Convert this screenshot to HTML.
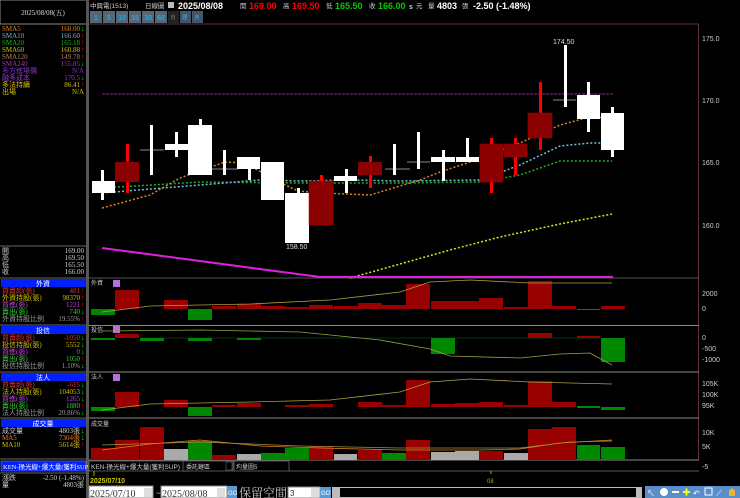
<!DOCTYPE html>
<html><head><meta charset="utf-8"><style>
html,body{margin:0;padding:0;background:#000;width:740px;height:498px;overflow:hidden}
svg{display:block;font-family:"Liberation Sans","Noto Sans CJK TC",sans-serif}
</style></head><body>
<svg width="740" height="498" viewBox="0 0 740 498" xmlns="http://www.w3.org/2000/svg">
<rect width="740" height="498" fill="#000"/>
<!-- left panel borders -->
<rect x="0" y="0" width="87" height="24" fill="#000" stroke="#888" stroke-width="1"/>
<text x="43" y="15" fill="#ddd" font-size="7" text-anchor="middle" font-family="Liberation Serif,Noto Serif CJK SC,serif">2025/08/08(五)</text>
<rect x="86" y="0" width="3" height="498" fill="#555"/>
<g font-size="7" font-family="Liberation Serif,Noto Sans CJK TC,serif">
<text x="2" y="31" fill="#e08020">SMA5</text><text x="80" y="31" fill="#e08020" text-anchor="end">168.00</text><text x="81" y="31" fill="#0f0">↓</text>
<text x="2" y="38" fill="#70b0e0">SMA10</text><text x="80" y="38" fill="#70b0e0" text-anchor="end">166.60</text><text x="81" y="38" fill="#f00">↑</text>
<text x="2" y="45" fill="#20b020">SMA20</text><text x="80" y="45" fill="#20b020" text-anchor="end">165.18</text><text x="81" y="45" fill="#f00">↑</text>
<text x="2" y="52" fill="#d0c000">SMA60</text><text x="80" y="52" fill="#d0c000" text-anchor="end">160.88</text><text x="81" y="52" fill="#f00">↑</text>
<text x="2" y="59" fill="#b08060">SMA120</text><text x="80" y="59" fill="#b08060" text-anchor="end">149.78</text><text x="81" y="59" fill="#f00">↑</text>
<text x="2" y="66" fill="#b030b0">SMA240</text><text x="80" y="66" fill="#b030b0" text-anchor="end">155.85</text><text x="81" y="66" fill="#0f0">↓</text>
<text x="2" y="73" fill="#8030d0">多方進場價</text><text x="84" y="73" fill="#8030d0" text-anchor="end">N/A</text>
<text x="2" y="80" fill="#9040c0">融多成本</text><text x="80" y="80" fill="#9040c0" text-anchor="end">170.5</text><text x="81" y="80" fill="#888">↓</text>
<text x="2" y="87" fill="#d0c000">多法持續</text><text x="80" y="87" fill="#d0c000" text-anchor="end">86.41</text><text x="81" y="87" fill="#f00">↑</text>
<text x="2" y="94" fill="#d0c000">出場</text><text x="84" y="94" fill="#d0c000" text-anchor="end">N/A</text>
<line x1="0" y1="246" x2="87" y2="246" fill="none" stroke="#666"/>
<text x="2" y="253" fill="#ccc">開</text><text x="84" y="253" fill="#ccc" text-anchor="end">169.00</text>
<text x="2" y="260" fill="#ccc">高</text><text x="84" y="260" fill="#ccc" text-anchor="end">169.50</text>
<text x="2" y="267" fill="#ccc">低</text><text x="84" y="267" fill="#ccc" text-anchor="end">165.50</text>
<text x="2" y="274" fill="#ccc">收</text><text x="84" y="274" fill="#ccc" text-anchor="end">166.00</text>
<!-- 外資 -->
<rect x="1" y="279" width="85" height="8" fill="#0020ff"/><text x="43" y="286" fill="#fff" text-anchor="middle">外資</text>
<text x="2" y="293" fill="#e03030">買賣超(張)</text><text x="80" y="293" fill="#e03030" text-anchor="end">481</text><text x="81" y="293" fill="#f00">↑</text>
<text x="2" y="300" fill="#d0c000">外資持股(張)</text><text x="80" y="300" fill="#d0c000" text-anchor="end">98370</text><text x="81" y="300" fill="#f00">↑</text>
<text x="2" y="307" fill="#c040e0">買進(張)</text><text x="80" y="307" fill="#c040e0" text-anchor="end">1221</text><text x="81" y="307" fill="#f00">↑</text>
<text x="2" y="314" fill="#30d030">賣出(張)</text><text x="80" y="314" fill="#30d030" text-anchor="end">740</text><text x="81" y="314" fill="#0f0">↓</text>
<text x="2" y="321" fill="#999">外資持股比例</text><text x="80" y="321" fill="#999" text-anchor="end">19.55%</text><text x="81" y="321" fill="#f00">↑</text>
<!-- 投信 -->
<rect x="1" y="326" width="85" height="8" fill="#0020ff"/><text x="43" y="333" fill="#fff" text-anchor="middle">投信</text>
<text x="2" y="340" fill="#e03030">買賣超(張)</text><text x="80" y="340" fill="#e03030" text-anchor="end">-1050</text><text x="81" y="340" fill="#0f0">↓</text>
<text x="2" y="347" fill="#d0c000">投信持股(張)</text><text x="80" y="347" fill="#d0c000" text-anchor="end">5552</text><text x="81" y="347" fill="#0f0">↓</text>
<text x="2" y="354" fill="#c040e0">買進(張)</text><text x="80" y="354" fill="#c040e0" text-anchor="end">0</text><text x="81" y="354" fill="#0f0">↓</text>
<text x="2" y="361" fill="#30d030">賣出(張)</text><text x="80" y="361" fill="#30d030" text-anchor="end">1050</text><text x="81" y="361" fill="#f00">↑</text>
<text x="2" y="368" fill="#999">投信持股比例</text><text x="80" y="368" fill="#999" text-anchor="end">1.10%</text><text x="81" y="368" fill="#0f0">↓</text>
<!-- 法人 -->
<rect x="1" y="373" width="85" height="8" fill="#0020ff"/><text x="43" y="380" fill="#fff" text-anchor="middle">法人</text>
<text x="2" y="387" fill="#e03030">買賣超(張)</text><text x="80" y="387" fill="#e03030" text-anchor="end">-615</text><text x="81" y="387" fill="#0f0">↓</text>
<text x="2" y="394" fill="#d0c000">法人持股(張)</text><text x="80" y="394" fill="#d0c000" text-anchor="end">104053</text><text x="81" y="394" fill="#0f0">↓</text>
<text x="2" y="401" fill="#c040e0">買進(張)</text><text x="80" y="401" fill="#c040e0" text-anchor="end">1265</text><text x="81" y="401" fill="#0f0">↓</text>
<text x="2" y="408" fill="#30d030">賣出(張)</text><text x="80" y="408" fill="#30d030" text-anchor="end">1880</text><text x="81" y="408" fill="#f00">↑</text>
<text x="2" y="415" fill="#999">法人持股比例</text><text x="80" y="415" fill="#999" text-anchor="end">20.86%</text><text x="81" y="415" fill="#0f0">↓</text>
<!-- 成交量 -->
<rect x="1" y="419" width="85" height="8" fill="#0020ff"/><text x="43" y="426" fill="#fff" text-anchor="middle">成交量</text>
<text x="2" y="433" fill="#ccc">成交量</text><text x="80" y="433" fill="#ccc" text-anchor="end">4803張</text><text x="81" y="433" fill="#0f0">↓</text>
<text x="2" y="440" fill="#e08020">MA5</text><text x="80" y="440" fill="#e08020" text-anchor="end">7304張</text><text x="81" y="440" fill="#0f0">↓</text>
<text x="2" y="447" fill="#d0c000">MA10</text><text x="80" y="447" fill="#d0c000" text-anchor="end">5614張</text><text x="81" y="447" fill="#f00">↑</text>
<rect x="1" y="461" width="85" height="10" fill="#0020ff" stroke="#88f" stroke-width="0.5"/><text x="3" y="469" fill="#fff" font-size="6.5">KEN-操光線+爆大量(獲利SUP)</text>
<text x="2" y="480" fill="#ccc">漲跌</text><text x="84" y="480" fill="#ccc" text-anchor="end">-2.50 (-1.48%)</text>
<text x="2" y="487" fill="#ccc">量</text><text x="84" y="487" fill="#ccc" text-anchor="end">4803張</text>
</g>
<line x1="0" y1="278" x2="87" y2="278" stroke="#666"/>
<line x1="0" y1="325" x2="87" y2="325" stroke="#666"/>
<line x1="0" y1="372" x2="87" y2="372" stroke="#666"/>
<line x1="0" y1="418" x2="87" y2="418" stroke="#666"/>
<line x1="0" y1="459" x2="87" y2="459" stroke="#666"/>
<line x1="0" y1="473" x2="87" y2="473" stroke="#666"/>

<!-- top header -->
<g font-size="9" font-weight="bold">
<text x="90" y="8" fill="#ccc" font-size="6.5" font-weight="normal">中興電(1513)</text>
<text x="145" y="8" fill="#ccc" font-size="6.5" font-weight="normal">日線圖</text>
<rect x="168" y="2" width="6" height="6" fill="#bbb"/>
<text x="178" y="9" fill="#fff">2025/08/08</text>
<text x="240" y="8" fill="#ccc" font-size="6.5" font-weight="normal">開</text><text x="249" y="9" fill="#f00">169.00</text>
<text x="283" y="8" fill="#ccc" font-size="6.5" font-weight="normal">高</text><text x="292" y="9" fill="#f00">169.50</text>
<text x="326" y="8" fill="#ccc" font-size="6.5" font-weight="normal">低</text><text x="335" y="9" fill="#0c0">165.50</text>
<text x="369" y="8" fill="#ccc" font-size="6.5" font-weight="normal">收</text><text x="378" y="9" fill="#0c0">166.00</text>
<text x="409" y="9" fill="#ccc" font-size="7">s</text><text x="416" y="8" fill="#ccc" font-size="6.5" font-weight="normal">元</text>
<text x="428" y="8" fill="#ccc" font-size="6.5" font-weight="normal">量</text><text x="437" y="9" fill="#fff">4803</text><text x="462" y="8" fill="#ccc" font-size="6.5" font-weight="normal">張</text>
<text x="473" y="9" fill="#fff">-2.50 (-1.48%)</text>
</g>
<g font-size="7" font-weight="bold" fill="#2ad">
<rect x="90" y="11" width="12" height="12" fill="#567"/><text x="96" y="20" text-anchor="middle">1</text>
<rect x="103" y="11" width="12" height="12" fill="#567"/><text x="109" y="20" text-anchor="middle">5</text>
<rect x="116" y="11" width="12" height="12" fill="#567"/><text x="122" y="20" text-anchor="middle">10</text>
<rect x="129" y="11" width="12" height="12" fill="#567"/><text x="135" y="20" text-anchor="middle">15</text>
<rect x="142" y="11" width="12" height="12" fill="#567"/><text x="148" y="20" text-anchor="middle">30</text>
<rect x="155" y="11" width="12" height="12" fill="#567"/><text x="161" y="20" text-anchor="middle">60</text>
<rect x="168" y="11" width="11" height="12" fill="#222"/><text x="173" y="19" text-anchor="middle" font-size="5" fill="#666">日</text>
<rect x="180" y="11" width="11" height="12" fill="#456"/><text x="185" y="19" text-anchor="middle" font-size="5">週</text>
<rect x="192" y="11" width="11" height="12" fill="#456"/><text x="197" y="19" text-anchor="middle" font-size="5">月</text>
</g>

<!-- chart frame -->
<line x1="89" y1="24" x2="699" y2="24" stroke="#603040"/>
<line x1="698.5" y1="24" x2="698.5" y2="460" stroke="#603040"/>
<line x1="89" y1="278" x2="699" y2="278" stroke="#555"/>
<line x1="89" y1="325.5" x2="699" y2="325.5" stroke="#888"/>
<line x1="89" y1="372" x2="699" y2="372" stroke="#888"/>
<line x1="89" y1="418" x2="699" y2="418" stroke="#888"/>
<line x1="89" y1="460" x2="699" y2="460" stroke="#888"/>
<rect x="718" y="0" width="22" height="462" fill="#000"/>
<g font-size="7" fill="#ccc" font-family="Liberation Sans,sans-serif">
<text x="702" y="41">175.0</text><text x="702" y="103">170.0</text><text x="702" y="165">165.0</text><text x="702" y="228">160.0</text>
<text x="702" y="296">2000</text><text x="702" y="311">0</text>
<text x="702" y="340">0</text><text x="702" y="351">-500</text><text x="702" y="362">-1000</text>
<text x="702" y="386">105K</text><text x="702" y="397">100K</text><text x="702" y="408">95K</text>
<text x="702" y="435">10K</text><text x="702" y="449">5K</text><text x="702" y="469">-5</text>
</g>

<!-- horizontal line 170.5 -->
<line x1="102" y1="94" x2="613" y2="94" stroke="#803080" stroke-width="1" stroke-dasharray="3,1"/>

<!-- moving averages -->
<polyline points="350,278 400,264 450,250 500,237 560,224 612,214" fill="none" stroke="#e0e020" stroke-width="1.5" stroke-dasharray="2,2"/>
<polyline points="102,188 200,182 300,183 400,183 480,182 520,175 560,161 612,161" fill="none" stroke="#20b020" stroke-width="1.5" stroke-dasharray="2,2"/>
<polyline points="102,193 200,185 260,180 300,181 350,180 400,181 480,180 520,165 560,146 590,143 612,143" fill="none" stroke="#70c0e0" stroke-width="1.5" stroke-dasharray="2,2"/>
<polyline points="102,208 150,195 180,178 225,162 245,163 275,180 298,191 320,193 370,195 420,180 440,172 470,162 520,143 560,125 590,117 612,118" fill="none" stroke="#e08020" stroke-width="1.5" stroke-dasharray="2,2"/>
<polyline points="102,248 200,261 320,277" fill="none" stroke="#e020e0" stroke-width="2"/>
<line x1="320" y1="277" x2="613" y2="277" stroke="#e020e0" stroke-width="2"/>

<!-- candles -->
<g stroke="none">
<rect x="101" y="170" width="3" height="30" fill="#fff"/><rect x="92" y="181" width="23" height="12" fill="#fff"/>
<rect x="126" y="144" width="3" height="49" fill="#f00"/><rect x="115" y="162" width="24" height="20" fill="#8b0000"/>
<line x1="140" y1="150" x2="164" y2="150" stroke="#888"/><rect x="150" y="125" width="3" height="50" fill="#fff"/>
<rect x="175" y="132" width="3" height="25" fill="#fff"/><rect x="165" y="144" width="23" height="6" fill="#fff"/>
<rect x="199" y="119" width="3" height="10" fill="#fff"/><rect x="188" y="125" width="24" height="50" fill="#fff"/>
<line x1="212" y1="169" x2="238" y2="169" stroke="#888"/><rect x="223" y="150" width="3" height="25" fill="#fff"/>
<rect x="248" y="157" width="3" height="23" fill="#fff"/><rect x="237" y="157" width="23" height="12" fill="#fff"/>
<rect x="261" y="162" width="23" height="38" fill="#fff"/>
<rect x="297" y="188" width="3" height="8" fill="#fff"/><rect x="285" y="193" width="24" height="50" fill="#fff"/>
<rect x="320" y="175" width="3" height="8" fill="#f00"/><rect x="309" y="181" width="24" height="44" fill="#8b0000" stroke="#a00" stroke-width="0.5"/>
<rect x="345" y="169" width="3" height="24" fill="#fff"/><rect x="334" y="176" width="23" height="5" fill="#fff"/>
<rect x="369" y="156" width="3" height="32" fill="#f00"/><rect x="358" y="162" width="24" height="13" fill="#8b0000"/>
<line x1="385" y1="169" x2="410" y2="169" stroke="#888"/><rect x="393" y="144" width="3" height="31" fill="#fff"/>
<line x1="407" y1="162" x2="430" y2="162" stroke="#888"/><rect x="417" y="132" width="3" height="37" fill="#fff"/>
<rect x="442" y="150" width="3" height="31" fill="#fff"/><rect x="431" y="157" width="24" height="5" fill="#fff"/>
<rect x="466" y="138" width="3" height="24" fill="#fff"/><rect x="456" y="157" width="23" height="5" fill="#fff"/>
<rect x="490" y="138" width="3" height="55" fill="#f00"/><rect x="480" y="144" width="23" height="38" fill="#8b0000" stroke="#a00" stroke-width="0.5"/>
<rect x="514" y="138" width="3" height="37" fill="#f00"/><rect x="504" y="144" width="23" height="13" fill="#8b0000" stroke="#a00" stroke-width="0.5"/>
<rect x="539" y="82" width="3" height="68" fill="#f00"/><rect x="528" y="113" width="24" height="25" fill="#8b0000" stroke="#a00" stroke-width="0.5"/>
<line x1="553" y1="100" x2="576" y2="100" stroke="#888"/><rect x="564" y="45" width="3" height="62" fill="#fff"/>
<rect x="587" y="82" width="3" height="50" fill="#fff"/><rect x="577" y="95" width="23" height="24" fill="#fff"/>
<rect x="611" y="107" width="3" height="50" fill="#fff"/><rect x="601" y="113" width="23" height="37" fill="#fff"/>
</g>
<text x="553" y="44" fill="#ddd" font-size="7">174.50</text>
<text x="286" y="249" fill="#ddd" font-size="7">158.50</text>

<!-- panel labels -->
<g font-size="6" fill="#ccc">
<text x="91" y="285">外資</text><rect x="113" y="280" width="7" height="7" fill="#b070e0"/>
<text x="91" y="332">投信</text><rect x="113" y="326" width="7" height="7" fill="#b070e0"/>
<text x="91" y="379">法人</text><rect x="113" y="374" width="7" height="7" fill="#b070e0"/>
<text x="91" y="426">成交量</text>
</g>

<!-- panel 1 外資 zero 309 -->
<g>
<rect x="91" y="309" width="24" height="6" fill="#080"/>
<rect x="115" y="290" width="24" height="19" fill="#900"/>
<rect x="164" y="300" width="24" height="9" fill="#900"/>
<rect x="188" y="309" width="24" height="11" fill="#080"/>
<rect x="212" y="306" width="24" height="3" fill="#900"/>
<rect x="237" y="304" width="24" height="5" fill="#900"/>
<rect x="261" y="306" width="24" height="3" fill="#900"/>
<rect x="285" y="307" width="24" height="2" fill="#900"/>
<rect x="309" y="305" width="24" height="4" fill="#900"/>
<rect x="334" y="306" width="24" height="3" fill="#900"/>
<rect x="358" y="303" width="24" height="6" fill="#900"/>
<rect x="382" y="305" width="24" height="4" fill="#900"/>
<rect x="406" y="284" width="24" height="25" fill="#900"/>
<rect x="431" y="301" width="24" height="8" fill="#900"/>
<rect x="455" y="301" width="24" height="8" fill="#900"/>
<rect x="479" y="298" width="24" height="11" fill="#900"/>
<rect x="504" y="307" width="24" height="2" fill="#900"/>
<rect x="528" y="281" width="24" height="28" fill="#900"/>
<rect x="552" y="306" width="24" height="3" fill="#900"/>
<rect x="577" y="309" width="23" height="1" fill="#080"/>
<rect x="601" y="306" width="24" height="3" fill="#900"/>
<polyline points="102,312 150,306 250,304 330,300 400,292 430,282 470,280 530,283 570,283 612,283" fill="none" stroke="#b0a040" stroke-width="0.8"/>
</g>
<!-- panel 2 投信 zero 338 -->
<g>
<rect x="91" y="338" width="24" height="2" fill="#080"/>
<rect x="115" y="334" width="24" height="4" fill="#900"/>
<rect x="140" y="338" width="24" height="3" fill="#080"/>
<rect x="188" y="338" width="24" height="3" fill="#080"/>
<rect x="237" y="338" width="24" height="2" fill="#080"/>
<rect x="431" y="338" width="24" height="16" fill="#080"/>
<rect x="528" y="333" width="24" height="5" fill="#900"/>
<rect x="577" y="336" width="23" height="2" fill="#900"/>
<rect x="601" y="338" width="24" height="24" fill="#080"/>
<line x1="140" y1="338" x2="600" y2="338" stroke="#062" stroke-width="0.6"/>
<polyline points="102,331 200,330 300,332 380,340 430,349 450,356 520,358 560,354 590,353 612,365" fill="none" stroke="#a0a040" stroke-width="0.8"/>
</g>
<!-- panel 3 法人 zero 407 -->
<g>
<rect x="91" y="407" width="24" height="4" fill="#080"/>
<rect x="115" y="392" width="24" height="15" fill="#900"/>
<rect x="164" y="400" width="24" height="7" fill="#900"/>
<rect x="188" y="407" width="24" height="9" fill="#080"/>
<rect x="212" y="405" width="24" height="2" fill="#900"/>
<rect x="237" y="403" width="24" height="4" fill="#900"/>
<rect x="285" y="405" width="24" height="2" fill="#900"/>
<rect x="309" y="404" width="24" height="3" fill="#900"/>
<rect x="358" y="402" width="24" height="5" fill="#900"/>
<rect x="382" y="405" width="24" height="2" fill="#900"/>
<rect x="406" y="380" width="24" height="27" fill="#900"/>
<rect x="431" y="404" width="24" height="3" fill="#900"/>
<rect x="455" y="403" width="24" height="4" fill="#900"/>
<rect x="479" y="402" width="24" height="5" fill="#900"/>
<rect x="504" y="405" width="24" height="2" fill="#900"/>
<rect x="528" y="381" width="24" height="26" fill="#900"/>
<rect x="552" y="402" width="24" height="5" fill="#900"/>
<rect x="577" y="406" width="23" height="2" fill="#080"/>
<rect x="601" y="407" width="24" height="3" fill="#080"/>
<polyline points="102,410 150,404 250,402 330,400 400,392 430,382 470,379 530,382 570,383 612,384" fill="none" stroke="#b0a040" stroke-width="0.8"/>
</g>
<!-- panel 4 volume bottom 460 -->
<g>
<rect x="91" y="448" width="24" height="12" fill="#900"/>
<rect x="115" y="440" width="24" height="20" fill="#900"/>
<rect x="140" y="427" width="24" height="33" fill="#900"/>
<rect x="164" y="449" width="24" height="11" fill="#aaa"/>
<rect x="188" y="441" width="24" height="19" fill="#080"/>
<rect x="212" y="455" width="24" height="5" fill="#900"/>
<rect x="237" y="454" width="24" height="6" fill="#aaa"/>
<rect x="261" y="453" width="24" height="7" fill="#080"/>
<rect x="285" y="448" width="24" height="12" fill="#080"/>
<rect x="309" y="446" width="24" height="14" fill="#900"/>
<rect x="334" y="454" width="23" height="6" fill="#aaa"/>
<rect x="358" y="450" width="24" height="10" fill="#900"/>
<rect x="382" y="453" width="24" height="7" fill="#080"/>
<rect x="406" y="440" width="24" height="20" fill="#900"/>
<rect x="431" y="452" width="24" height="8" fill="#aaa"/>
<rect x="455" y="451" width="24" height="9" fill="#aaa"/>
<rect x="479" y="451" width="24" height="9" fill="#900"/>
<rect x="504" y="453" width="24" height="7" fill="#aaa"/>
<rect x="528" y="429" width="24" height="31" fill="#900"/>
<rect x="552" y="427" width="24" height="33" fill="#900"/>
<rect x="577" y="445" width="23" height="15" fill="#080"/>
<rect x="601" y="447" width="24" height="13" fill="#080"/>
<polyline points="102,450 150,444 200,440 260,446 320,448 400,450 480,450 520,449 560,443 612,440" fill="none" stroke="#e08020" stroke-width="0.8"/>
<polyline points="102,445 200,442 300,446 400,448 520,448 570,442 612,441" fill="none" stroke="#a09040" stroke-width="0.8"/>
</g>

<!-- bottom controls -->
<rect x="89" y="461" width="100" height="10" fill="#000" stroke="#777" stroke-width="0.7"/>
<text x="91" y="469" fill="#ccc" font-size="6.5">KEN-操光線+爆大量(獲利SUP)</text>
<rect x="183" y="461" width="50" height="10" fill="#000" stroke="#777" stroke-width="0.7"/>
<text x="186" y="469" fill="#ccc" font-size="6">委託鏈區</text>
<rect x="226" y="462" width="6" height="8" fill="#000" stroke="#777" stroke-width="0.5"/>
<rect x="234" y="461" width="55" height="10" fill="#000" stroke="#777" stroke-width="0.7"/>
<text x="236" y="469" fill="#ccc" font-size="6">均量圖5</text>
<line x1="289" y1="471" x2="699" y2="471" stroke="#777" stroke-width="0.7"/>
<line x1="94" y1="471" x2="94" y2="476" stroke="#aa0"/>
<text x="90" y="483" fill="#cc0" font-size="7" font-weight="bold">2025/07/10</text>
<line x1="491" y1="471" x2="491" y2="474" stroke="#aa0"/>
<text x="487" y="483" fill="#aa0" font-size="6">08</text>

<rect x="89" y="486" width="64" height="12" fill="#fff" stroke="#888"/>
<text x="90" y="497" fill="#333" font-size="10" font-family="Liberation Serif,serif">2025/07/10</text>
<rect x="144" y="488" width="8" height="9" fill="#ddd"/>
<text x="156" y="496" fill="#ccc" font-size="8">~</text>
<rect x="161" y="486" width="66" height="12" fill="#fff" stroke="#888"/>
<text x="162" y="497" fill="#333" font-size="10" font-family="Liberation Serif,serif">2025/08/08</text>
<rect x="217" y="488" width="8" height="9" fill="#ddd"/>
<rect x="227" y="486" width="10" height="12" fill="#5a9bd5"/>
<text x="228" y="495" fill="#fff" font-size="6">GO</text>
<text x="239" y="497" fill="#ccc" font-size="12" font-family="Liberation Serif,Noto Serif CJK SC,serif">保留空間</text>
<rect x="288" y="487" width="32" height="11" fill="#fff" stroke="#888"/>
<text x="290" y="496" fill="#333" font-size="8">3</text>
<rect x="311" y="488" width="8" height="9" fill="#ddd"/>
<rect x="320" y="487" width="11" height="11" fill="#5a9bd5"/>
<text x="321" y="495" fill="#fff" font-size="6">GO</text>
<rect x="332" y="487" width="310" height="11" fill="#bbb"/>
<rect x="340" y="488" width="296" height="9" fill="#000"/>
<g>
<rect x="645" y="486" width="95" height="12" fill="#5a8ec8"/>
<text x="647" y="496" fill="#fff" font-size="8">↖</text>
<circle cx="664" cy="492" r="4" fill="#fff"/>
<rect x="672" y="491" width="7" height="2" fill="#fff"/>
<rect x="683" y="491" width="7" height="2" fill="#ff0"/><rect x="685.5" y="488.5" width="2" height="7" fill="#ff0"/>
<text x="693" y="496" fill="#fff" font-size="8">↶</text>
<rect x="705" y="488" width="7" height="7" fill="none" stroke="#fff"/>
<text x="716" y="496" fill="#fff" font-size="8">⟋</text>
<path d="M729 496 L729 491 Q732 486 735 491 L735 496 Z" fill="#f0b030"/>
</g>
</svg>
</body></html>
